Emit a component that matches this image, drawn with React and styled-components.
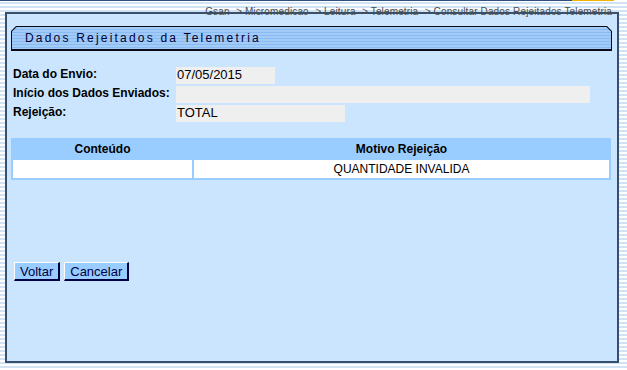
import React from 'react';
import styled, { createGlobalStyle } from 'styled-components';

const GlobalStyle = createGlobalStyle`
  html, body {
    margin: 0;
    padding: 0;
  }
  body {
    width: 627px;
    height: 370px;
    overflow: hidden;
    font-family: "Liberation Sans", Arial, sans-serif;
    color: #000;
    background: repeating-linear-gradient(
      to bottom,
      #ffffff 0px,
      #ffffff 2px,
      #cfe3f5 2px,
      #cfe3f5 4px
    );
  }
`;

const TopBar = styled.div`
  height: 12px;
  box-sizing: border-box;
  padding: 1px 15px 0 0;
  text-align: right;
  background: linear-gradient(
      to right,
      #2f4f7f 0,
      #2f4f7f 572px,
      #f2b400 572px,
      #f2b400 614px,
      transparent 614px
    )
    no-repeat top left / 100% 1px;
`;

const Breadcrumb = styled.span`
  font-size: 10px;
  line-height: 11px;
  letter-spacing: 0.14px;
  color: #4d4d4d;
`;

const Panel = styled.div`
  margin-left: 5px;
  width: 614px;
  height: 351px;
  box-sizing: border-box;
  border: 2px solid #36506e;
  background: #cbe5fe;
  padding: 12px 5px 0 4px;
`;

const TitleFrame = styled.div`
  height: 25px;
  box-sizing: border-box;
  padding: 1px 1px 2px 1px;
  background: #0a0a1a;
  clip-path: polygon(5px 0, calc(100% - 5px) 0, 100% 5px, 100% 100%, 0 100%, 0 5px);
`;

const TitleFill = styled.div`
  height: 100%;
  padding-left: 13px;
  font-size: 12px;
  line-height: 22px;
  letter-spacing: 2.2px;
  color: #000033;
  background: repeating-linear-gradient(
    to bottom,
    #a3cbf8 0px,
    #a3cbf8 2px,
    #89baf1 2px,
    #89baf1 3px
  );
  clip-path: polygon(4.6px 0, calc(100% - 4.6px) 0, 100% 4.6px, 100% 100%, 0 100%, 0 4.6px);
`;

const Form = styled.div`
  display: grid;
  grid-template-columns: 163px auto;
  row-gap: 2px;
  margin-top: 16px;
  padding-left: 2px;
`;

const Label = styled.div`
  font-size: 12px;
  font-weight: bold;
  line-height: 15px;
  height: 17px;
`;

const Value = styled.div`
  width: ${(p) => p.w}px;
  height: 17px;
  box-sizing: border-box;
  padding-left: 1px;
  background: #efefef;
  font-size: 13px;
  line-height: 15px;
`;

const Table = styled.table`
  margin: 16px 0 0 0;
  width: 600px;
  border-spacing: 2px;
  background: #99ccff;
  table-layout: fixed;
`;

const Th = styled.th`
  height: 18px;
  padding: 0;
  font-size: 12px;
  font-weight: bold;
  text-align: center;
`;

const Td = styled.td`
  height: 18px;
  padding: 0;
  background: #ffffff;
  font-size: 12px;
  text-align: center;
`;

const Buttons = styled.div`
  display: flex;
  gap: 4px;
  margin-top: 82px;
  padding-left: 3px;
`;

const Button = styled.button`
  height: 19px;
  padding: 0 5px;
  font-family: "Liberation Sans", Arial, sans-serif;
  font-size: 13px;
  line-height: 15px;
  color: #000044;
  background: #99ccff;
  border-style: solid;
  border-width: 1px 2px 2px 1px;
  border-color: #ffffff #000044 #000044 #ffffff;
  cursor: pointer;
`;

const App = () => {
  return (
    <>
      <GlobalStyle />
      <TopBar>
        <Breadcrumb>
          Gsan -&gt; Micromedicao -&gt; Leitura -&gt; Telemetria -&gt; Consultar Dados Rejeitados Telemetria
        </Breadcrumb>
      </TopBar>
      <Panel>
        <TitleFrame>
          <TitleFill>Dados Rejeitados da Telemetria</TitleFill>
        </TitleFrame>
        <Form>
          <Label>Data do Envio:</Label>
          <Value w={99}>07/05/2015</Value>
          <Label>Início dos Dados Enviados:</Label>
          <Value w={414} />
          <Label>Rejeição:</Label>
          <Value w={169}>TOTAL</Value>
        </Form>
        <Table>
          <colgroup>
            <col style={{ width: 179 }} />
            <col />
          </colgroup>
          <thead>
            <tr>
              <Th>Conteúdo</Th>
              <Th>Motivo Rejeição</Th>
            </tr>
          </thead>
          <tbody>
            <tr>
              <Td></Td>
              <Td>QUANTIDADE INVALIDA</Td>
            </tr>
          </tbody>
        </Table>
        <Buttons>
          <Button type="button">Voltar</Button>
          <Button type="button">Cancelar</Button>
        </Buttons>
      </Panel>
    </>
  );
};

export default App;
